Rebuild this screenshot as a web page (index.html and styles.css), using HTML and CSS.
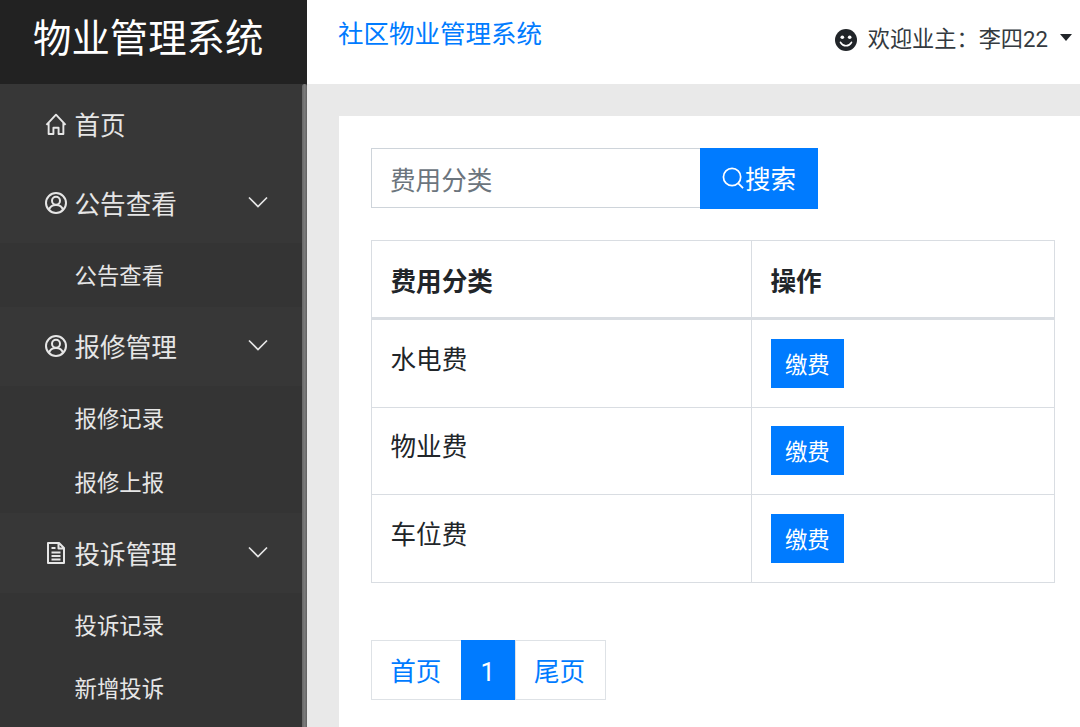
FILE: index.html
```html
<!DOCTYPE html>
<html lang="zh-CN">
<head>
<meta charset="utf-8">
<title>物业管理系统</title>
<link rel="stylesheet" href="styles.css">
</head>
<body>
<div class="app">
  <aside class="sidebar">
    <div class="brand">物业管理系统</div>
    <nav class="nav">
      <a class="nav-item"><svg class="nav-icon" viewBox="0 0 22 23"><path d="M1 12.500 11 1.800 21 12.500M3.300 10.500V22H8.300V15.500H13.700V22H18.700V10.500"/></svg><span>首页</span></a>
      <a class="nav-item"><svg class="nav-icon" viewBox="0 0 22 22"><circle cx="11" cy="11" r="10"/><circle cx="11" cy="8.700" r="4"/><path d="M4 18c.8-3.300 3.500-5 7-5s6.200 1.700 7 5"/></svg><span>公告查看</span><svg class="chev" viewBox="0 0 20 12"><path d="M1 1.500 10 10.500 19 1.500"/></svg></a>
      <a class="sub-item">公告查看</a>
      <a class="nav-item"><svg class="nav-icon" viewBox="0 0 22 22"><circle cx="11" cy="11" r="10"/><circle cx="11" cy="8.700" r="4"/><path d="M4 18c.8-3.300 3.500-5 7-5s6.200 1.700 7 5"/></svg><span>报修管理</span><svg class="chev" viewBox="0 0 20 12"><path d="M1 1.500 10 10.500 19 1.500"/></svg></a>
      <a class="sub-item">报修记录</a>
      <a class="sub-item">报修上报</a>
      <a class="nav-item"><svg class="nav-icon" viewBox="0 0 22 22"><path d="M3 1h11l5 5v15H3zM13.500 1v5.500H19M6.500 6h4M6.500 10.500h9M6.500 14h9M6.500 17.500h9"/></svg><span>投诉管理</span><svg class="chev" viewBox="0 0 20 12"><path d="M1 1.500 10 10.500 19 1.500"/></svg></a>
      <a class="sub-item">投诉记录</a>
      <a class="sub-item">新增投诉</a>
    </nav>
  </aside>
  <div class="main">
    <header class="topbar">
      <a class="site-title">社区物业管理系统</a>
      <div class="user">
        <svg class="smile" viewBox="0 0 24 24"><circle cx="12" cy="12" r="12" fill="#212529"/><circle cx="8" cy="9" r="2" fill="#fff"/><circle cx="16" cy="9" r="2" fill="#fff"/><path d="M6 14.500c1.500 2.600 3.500 3.800 6 3.800s4.500-1.200 6-3.800" fill="none" stroke="#fff" stroke-width="1.800" stroke-linecap="round"/></svg>
        <span class="user-name">欢迎业主：李四22</span>
        <span class="caret"></span>
      </div>
    </header>
    <div class="content">
      <section class="card">
        <form class="search">
          <input class="search-input" type="text" placeholder="费用分类">
          <button class="search-btn" type="button"><svg class="search-icon" viewBox="0 0 24 24"><circle cx="10.500" cy="10.500" r="9"/><path d="M17 17l5 5"/></svg><span class="search-label">搜索</span></button>
        </form>
        <table class="table">
          <thead>
            <tr><th class="col-name">费用分类</th><th>操作</th></tr>
          </thead>
          <tbody>
            <tr><td>水电费</td><td><a class="pay">缴费</a></td></tr>
            <tr><td>物业费</td><td><a class="pay">缴费</a></td></tr>
            <tr><td>车位费</td><td><a class="pay">缴费</a></td></tr>
          </tbody>
        </table>
        <ul class="pager">
          <li class="page">首页</li>
          <li class="page active">1</li>
          <li class="page">尾页</li>
        </ul>
      </section>
    </div>
  </div>
</div>
</body>
</html>
```
FILE: styles.css
```css
* { box-sizing: border-box; }
html, body { margin: 0; height: 727px; overflow: hidden; }
body {
  font-family: Roboto, "Noto Sans CJK SC", sans-serif;
  font-size: 25.6px;
  line-height: 1.5;
  color: #212529;
  background: #e9e9e9;
}
.app { display: grid; grid-template-columns: 307px 1fr; height: 727px; }

.sidebar { background: #343434; height: 727px; overflow: hidden; }
.brand {
  height: 84px;
  padding: 10px 0 0 33px;
  background: #222;
  color: #fff;
  font-size: 38.4px;
  line-height: 57px;
}
.nav { position: relative; height: 643px; }
.nav::after {
  content: "";
  position: absolute;
  top: 0;
  right: 0;
  bottom: 0;
  width: 5px;
  border-radius: 3px 3px 0 0;
  background: linear-gradient(90deg, #666, #7c7c7c 55%, #5f5f5f);
}
.nav-item {
  display: flex;
  align-items: center;
  height: 79.5px;
  padding-left: 45px;
  background: #373737;
  color: #e6e6e6;
}
.nav-item span { margin-left: 7.500px; position: relative; top: 2px; }
.nav-icon {
  width: 22px;
  height: 22px;
  fill: none;
  stroke: #e6e6e6;
  stroke-width: 2;
  stroke-linejoin: round;
}
.chev {
  width: 20px;
  height: 12px;
  margin-left: 70px;
  fill: none;
  stroke: #e6e6e6;
  stroke-width: 1.700;
  position: relative;
  top: -1px;
  left: 1px;
}
.sub-item {
  display: block;
  height: 63.500px;
  padding-left: 74.500px;
  font-size: 22.4px;
  line-height: 66px;
  color: #e6e6e6;
}

.main { display: flex; flex-direction: column; min-width: 0; }
.topbar {
  display: flex;
  justify-content: space-between;
  height: 84px;
  padding-left: 31px;
  background: #fff;
}
.site-title { color: #007bff; font-size: 25.5px; line-height: 68px; }
.user {
  display: flex;
  align-items: center;
  height: 80px;
  padding-right: 8px;
  font-size: 22.2px;
  color: #343a40;
}
.smile { width: 22px; height: 22px; margin-right: 11px; }
.caret {
  width: 0;
  height: 0;
  margin: 0 0 6px 12px;
  border-top: 7.500px solid #212529;
  border-left: 6.500px solid transparent;
  border-right: 6.500px solid transparent;
}

.content { flex: 1; padding: 32px 0 0 32px; }
.card {
  height: 100%;
  padding: 32px 25px 0 32px;
  background: #fff;
}
.search { display: flex; align-items: flex-start; margin-bottom: 31px; }
.search-input {
  width: 329px;
  height: 60px;
  padding: 5px 18px 0;
  border: 1.500px solid #ced4da;
  border-right: 0;
  font: inherit;
  color: #495057;
  outline: 0;
}
.search-input::placeholder { color: #6c757d; opacity: 1; }
.search-btn {
  display: flex;
  align-items: center;
  justify-content: center;
  width: 118px;
  height: 61px;
  padding: 0;
  border: 0;
  background: #007bff;
  color: #fff;
  font: inherit;
}
.search-icon {
  width: 23px;
  height: 23px;
  fill: none;
  stroke: #fff;
  stroke-width: 1.800;
}
.search-label { position: relative; top: 2px; }

.table { width: 684px; border-collapse: collapse; table-layout: fixed; }
.table th, .table td {
  padding: 18.700px 18.500px 19.100px;
  border: 1.600px solid #d9dde2;
  vertical-align: top;
  text-align: left;
}
.table th {
  padding-top: 22px;
  padding-bottom: 15.500px;
  font-weight: 700;
  border-bottom-width: 3.200px;
}
.table td { line-height: 43px; }
.col-name { width: 380px; }
.pay {
  display: inline-block;
  padding: 7px 14.400px 3px;
  background: #007bff;
  color: #fff;
  font-size: 22.4px;
  line-height: 39px;
  vertical-align: top;
}

.pager {
  display: flex;
  width: max-content;
  margin: 57px 0 0;
  padding: 0;
  list-style: none;
}
.page {
  height: 60px;
  padding: 2px 19.900px 0 18.200px;
  border: 1.500px solid #dee2e6;
  margin-left: -1px;
  color: #007bff;
  line-height: 58px;
}
.page:first-child { margin-left: 0; }
.page.active { background: #007bff; border-color: #007bff; color: #fff; }
```
